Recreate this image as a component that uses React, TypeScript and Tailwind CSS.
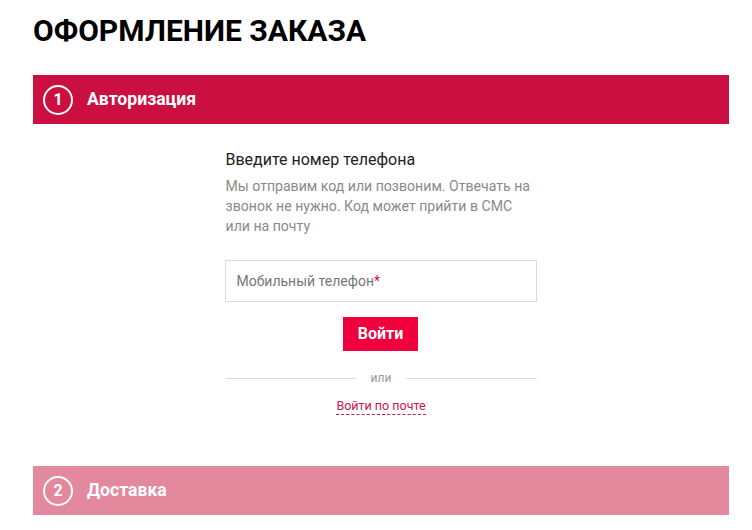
export default function App() {
  return (
    <div className="w-[752px] h-[530px] overflow-hidden bg-white pl-[33px] pr-[23px] pt-[13px]" style={{ fontFamily: "Roboto, 'Noto Sans', sans-serif" }}>
      <h1 className="text-[30px] leading-[36px] font-bold text-black tracking-[0px]">ОФОРМЛЕНИЕ ЗАКАЗА</h1>
      <div className="mt-[26px] h-[49px] bg-[#cb1041] flex items-center pl-[10px]">
        <div className="w-[30px] h-[30px] rounded-full border-2 border-white flex items-center justify-center text-white text-[16px] font-bold leading-none">1</div>
        <div className="ml-[14px] text-white text-[17.6px] font-bold">Авторизация</div>
      </div>
      <div className="flex justify-center pt-[26px]">
        <div className="w-[311px] flex flex-col">
          <div className="text-[16px] leading-[20px] text-[#222]">Введите номер телефона</div>
          <p className="mt-[6px] text-[14.1px] leading-[20px] text-[#8a8a8a]">
            Мы отправим код или позвоним. Отвечать на звонок не нужно. Код может прийти в СМС или на почту
          </p>
          <div className="mt-[24px] -ml-px h-[42px] border border-[#dcdcdc] flex items-center pl-[11px] text-[14px] text-[#777]">
            Мобильный телефон<span className="text-[#d0103f]">*</span>
          </div>
          <div className="mt-[15px] flex justify-center">
            <button className="w-[75px] h-[34px] -ml-px bg-[#f0003c] text-white text-[16px] font-bold">Войти</button>
          </div>
          <div className="mt-[19px] flex items-center h-[16px]">
            <div className="flex-1 h-px bg-[#dcdcdc]" />
            <div className="px-[15px] text-[12px] leading-[16px] text-[#9a9a9a]">или</div>
            <div className="flex-1 h-px bg-[#dcdcdc]" />
          </div>
          <div className="mt-[11px] flex justify-center">
            <span className="text-[12.5px] leading-[17px] text-[#c8174b] border-b border-dashed border-[#c8174b]">Войти по почте</span>
          </div>
        </div>
      </div>
      <div className="mt-[51px] h-[49px] bg-[#e4889e] flex items-center pl-[10px]">
        <div className="w-[30px] h-[30px] rounded-full border-2 border-white flex items-center justify-center text-white text-[16px] font-bold leading-none">2</div>
        <div className="ml-[14px] text-white text-[17.6px] font-bold">Доставка</div>
      </div>
    </div>
  );
}
